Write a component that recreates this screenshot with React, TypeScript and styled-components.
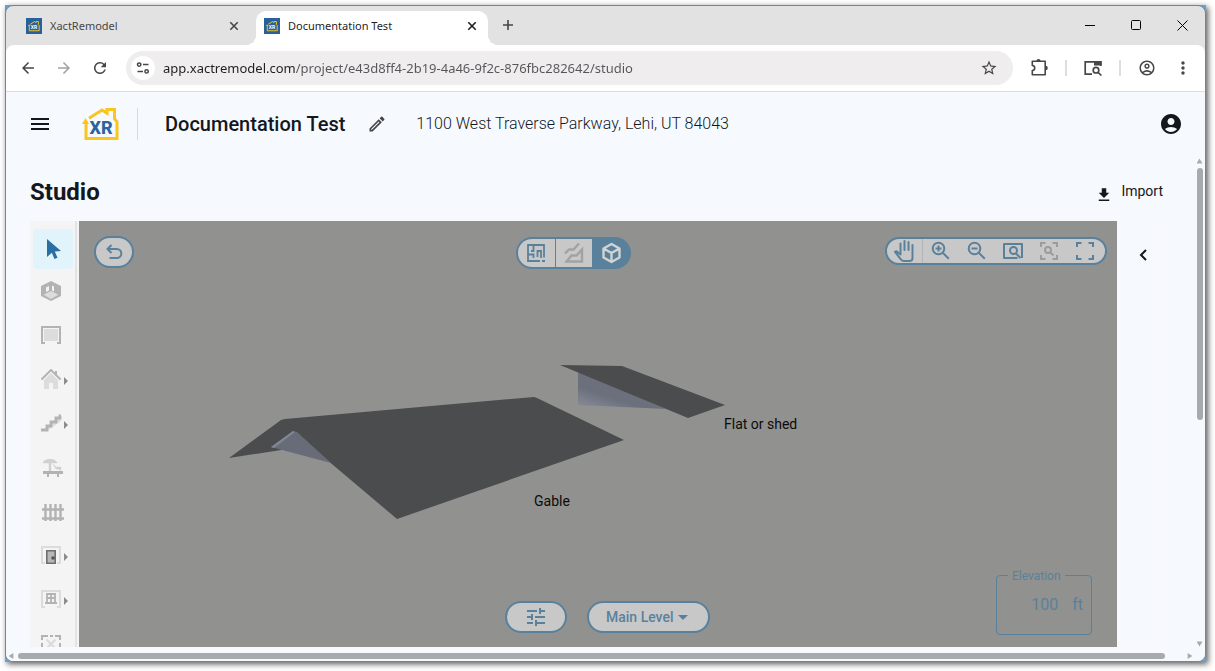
import React from "react";
import styled, { createGlobalStyle, css } from "styled-components";
import {
  MdArrowBack,
  MdArrowForward,
  MdRefresh,
  MdStarOutline,
  MdOutlineAccountCircle,
  MdAccountCircle,
  MdMoreVert,
  MdOutlineModeEdit,
  MdDownload,
  MdTune,
} from "react-icons/md";

const steel = "#5a819c";
const ink = "#14181d";
const chromeInk = "#474747";
const page = "#f6fafe";
const pill = "#c8c8c8";

const GlobalStyle = createGlobalStyle`
  *, *::before, *::after { box-sizing: border-box; }
  body { margin: 0; background: #fff; font-family: Roboto, sans-serif; color: ${ink}; }
  button, input, select { font: inherit; color: inherit; margin: 0; }
  button { border: 0; padding: 0; background: none; cursor: pointer; }
  svg { display: block; flex: none; }
  h1, h2 { margin: 0; }
`;

const Desktop = styled.div`
  height: 100vh;
  padding: 5px 9px 9px 5px;
  overflow: hidden;
`;

const Backdrop = styled.div`
  height: 100%;
  background: #6aa0cc;
  box-shadow: 2px 2px 6px rgba(0, 0, 0, 0.65);
`;

const BrowserWindow = styled.div`
  height: 100%;
  display: flex;
  flex-direction: column;
  overflow: hidden;
  border: 1px solid #6488a8;
  border-radius: 8px;
  background: #e2e2e2;
`;

/* ---------- browser chrome ---------- */

const chromeFont = css`
  font-family: "Segoe UI", "Noto Sans", "Open Sans", sans-serif;
`;

const TabStrip = styled.div`
  ${chromeFont}
  height: 39px;
  flex: none;
  display: flex;
  align-items: flex-end;
  padding-left: 12px;
`;

const TabItem = styled.div<{ $active?: boolean }>`
  position: relative;
  width: 232px;
  height: 34px;
  padding: 0 8px 5px;
  margin-right: 6px;
  display: flex;
  align-items: center;
  gap: 8px;
  font-size: 11px;
  color: ${(p) => (p.$active ? "#1f1f1f" : chromeInk)};
  ${(p) =>
    p.$active &&
    css`
      background: #fff;
      border-radius: 10px 10px 0 0;
      &::before,
      &::after {
        content: "";
        position: absolute;
        bottom: 0;
        width: 10px;
        height: 10px;
      }
      &::before {
        left: -10px;
        background: radial-gradient(circle at 0 0, transparent 10px, #fff 10px);
      }
      &::after {
        right: -10px;
        background: radial-gradient(circle at 100% 0, transparent 10px, #fff 10px);
      }
    `}
`;

const TabTitle = styled.span`
  flex: 1;
  white-space: nowrap;
`;

const SmallButton = styled.button`
  width: 16px;
  height: 16px;
  display: grid;
  place-items: center;
`;

const NewTabButton = styled(SmallButton)`
  width: 28px;
  height: 28px;
  margin-bottom: 6px;
  color: ${chromeInk};
`;

const WindowControls = styled.div`
  margin-left: auto;
  align-self: stretch;
  display: flex;
  color: #000;
`;

const WindowButton = styled.button`
  width: 46px;
  height: 38px;
  display: grid;
  place-items: center;
`;

const Toolbar = styled.div`
  ${chromeFont}
  height: 47px;
  flex: none;
  display: flex;
  align-items: center;
  padding: 0 4px;
  background: #fff;
  border-radius: 8px 8px 0 0;
  border-bottom: 1px solid #dcdfe1;
  color: ${chromeInk};
`;

const ToolbarButton = styled.button<{ $dim?: boolean }>`
  width: 36px;
  height: 34px;
  display: grid;
  place-items: center;
  opacity: ${(p) => (p.$dim ? 0.5 : 1)};
`;

const AddressBar = styled.div`
  flex: 1;
  height: 34px;
  margin: 0 8px;
  padding: 0 6px 0 5px;
  display: flex;
  align-items: center;
  border-radius: 17px;
  background: #efeded;
`;

const SiteInfo = styled.button`
  width: 24px;
  height: 24px;
  border-radius: 50%;
  background: #fff;
  display: grid;
  place-items: center;
`;

const UrlInput = styled.input`
  flex: 1;
  min-width: 0;
  margin-left: 8px;
  padding: 0;
  border: 0;
  outline: 0;
  font-size: 13px;
  color: transparent;
  background: linear-gradient(90deg, #1f1f1f 132px, #55555a 132px);
  background-clip: text;
  -webkit-background-clip: text;
`;

const ToolbarDivider = styled.span`
  width: 2px;
  height: 16px;
  margin: 0 8px;
  background: #dedede;
`;

/* ---------- application ---------- */

const AppShell = styled.div`
  flex: 1;
  min-height: 0;
  display: flex;
  flex-direction: column;
  background: ${page};
`;

const Header = styled.header`
  height: 64px;
  flex: none;
  display: flex;
  align-items: center;
  padding: 0 22px 0 24px;
`;

const IconButton = styled.button`
  display: grid;
  place-items: center;
`;

const LogoLink = styled.a`
  margin-left: 32px;
  padding-right: 17px;
  border-right: 1px solid #d5dae0;
`;

const ProjectName = styled.h1`
  margin: 0 22px 0 27px;
  font-size: 20px;
  line-height: 24px;
  font-weight: 500;
  white-space: nowrap;
`;

const ProjectAddress = styled.span`
  margin-left: 29px;
  flex: 1;
  font-size: 16px;
  line-height: 24px;
  font-weight: 300;
  white-space: nowrap;
`;

const ScrollArea = styled.div`
  flex: 1;
  min-height: 0;
  display: flex;
`;

const Content = styled.main`
  flex: 1;
  min-width: 0;
  display: flex;
  flex-direction: column;
  padding: 0 27px 0 24px;
`;

const TitleRow = styled.div`
  height: 65px;
  flex: none;
  display: flex;
  align-items: center;
  justify-content: space-between;
  padding: 6px 4px 0 0;
`;

const PageTitle = styled.h2`
  font-size: 24px;
  line-height: 32px;
  font-weight: 700;
`;

const ImportButton = styled.button`
  display: flex;
  align-items: center;
  gap: 8px;
  padding-bottom: 2px;
  font-size: 14px;
  line-height: 20px;
  svg {
    margin-top: 8px;
  }
`;

const Studio = styled.section`
  flex: 1;
  min-height: 0;
  display: flex;
`;

const ToolColumn = styled.div`
  width: 49px;
  display: flex;
  flex-direction: column;
  gap: 4px;
  padding: 8px 2px 0 3px;
  overflow: hidden;
  background: linear-gradient(90deg, #f4f4f4 45px, #e2e3e4 45px 47px, #f4f4f4 47px);
`;

const ToolButton = styled.button<{ $active?: boolean }>`
  position: relative;
  width: 40px;
  height: 40px;
  flex: none;
  display: grid;
  place-items: center;
  border-radius: 4px;
  background: ${(p) => (p.$active ? "#e1f3fb" : "transparent")};
`;

const FlyoutMark = styled.span`
  position: absolute;
  right: 5px;
  top: 16px;
  border: 4px solid transparent;
  border-left-color: #8c8c8c;
  border-right: 0;
`;

const Viewport = styled.div`
  position: relative;
  flex: 1;
  min-width: 0;
  display: flex;
  flex-direction: column;
  justify-content: space-between;
  overflow: hidden;
  background: #91918f;
  color: ${steel};
`;

const Scene = styled.svg`
  position: absolute;
  left: 0;
  top: 0;
`;

const SceneLabel = styled.span<{ $x: number; $y: number }>`
  position: absolute;
  left: ${(p) => p.$x}px;
  top: ${(p) => p.$y}px;
  font-size: 14px;
  line-height: 20px;
  color: #0b0b0b;
  white-space: nowrap;
`;

const ViewportBar = styled.div`
  position: relative;
  display: flex;
  align-items: flex-start;
  padding: 15px 10px 0 15px;
`;

const BottomBar = styled(ViewportBar)`
  padding: 0 25px 12px 0;
  align-items: flex-end;
`;

const Space = styled.span<{ $grow: number }>`
  flex: ${(p) => p.$grow};
`;

const pillShape = css`
  border: 2px solid ${steel};
  border-radius: 16px;
  background: ${pill};
`;

const PillButton = styled.button<{ $width: number }>`
  ${pillShape}
  width: ${(p) => p.$width}px;
  height: 32px;
  display: grid;
  place-items: center;
`;

const ViewSwitch = styled.div`
  ${pillShape}
  height: 32px;
  margin-top: 1px;
  display: flex;
  overflow: hidden;
  background: ${steel};
`;

const ViewButton = styled.button<{ $active?: boolean; $muted?: boolean }>`
  width: 37px;
  display: grid;
  place-items: center;
  background: ${(p) => (p.$active ? steel : pill)};
  color: ${(p) => (p.$active ? "#d3d3d3" : p.$muted ? "#a2a2a2" : steel)};
  & + & {
    border-left: 1px solid ${steel};
  }
`;

const ZoomBar = styled.div`
  ${pillShape}
  height: 28px;
  margin-top: 1px;
  padding-right: 2px;
  display: flex;
`;

const ZoomButton = styled.button<{ $muted?: boolean }>`
  width: 36px;
  display: grid;
  place-items: center;
  color: ${(p) => (p.$muted ? "#9c9c9c" : steel)};
  &:first-child {
    border-right: 1px solid #b2b4b6;
  }
`;

const LevelPicker = styled.label`
  ${pillShape}
  height: 32px;
  margin-left: 20px;
  padding-right: 20px;
  display: flex;
  align-items: center;
  gap: 4px;
`;

const LevelSelect = styled.select`
  appearance: none;
  border: 0;
  outline: 0;
  height: 26px;
  padding: 0 0 0 17px;
  background: transparent;
  font-size: 14px;
  font-weight: 500;
`;

const ControlGroup = styled.div`
  display: flex;
  padding: 0 2px 2px 0;
`;

const ElevationBox = styled.fieldset`
  width: 96px;
  height: 67px;
  min-width: 0;
  margin: 0;
  padding: 12px 8px 0;
  border: 1px solid ${steel};
  border-radius: 4px;
  legend {
    margin-left: 3px;
    padding: 1px 4px 0;
    font-size: 12px;
    line-height: 14px;
  }
`;

const ElevationValue = styled.label`
  display: flex;
  gap: 14px;
  font-size: 16px;
  line-height: 20px;
  input {
    flex: 1;
    min-width: 0;
    padding: 0;
    border: 0;
    outline: 0;
    height: 20px;
    background: none;
    text-align: right;
  }
`;

const SidePanel = styled.aside`
  width: 50px;
  padding-top: 24px;
  display: flex;
  justify-content: center;
  align-items: flex-start;
  border: solid #f9f9fb;
  border-width: 1px 1px 1px 0;
  border-radius: 0 8px 8px 0;
`;

const Arrow = styled.span<{ $dir: "up" | "down" | "left" | "right" }>`
  width: 6px;
  height: 6px;
  flex: none;
  background: #a7abae;
  clip-path: ${(p) =>
    ({
      up: "polygon(50% 10%, 100% 90%, 0 90%)",
      down: "polygon(0 10%, 100% 10%, 50% 90%)",
      left: "polygon(90% 0, 90% 100%, 10% 50%)",
      right: "polygon(10% 0, 90% 50%, 10% 100%)",
    })[p.$dir]};
`;

const VerticalBar = styled.div`
  width: 11px;
  display: flex;
  flex-direction: column;
  align-items: center;
  gap: 4px;
  padding-top: 2px;
`;

const HorizontalBar = styled.div`
  height: 14px;
  flex: none;
  display: flex;
  align-items: center;
  padding: 4px 12px 0 2px;
`;

const Thumb = styled.span<{ $grow: number }>`
  flex: ${(p) => p.$grow};
  min-width: 6px;
  min-height: 6px;
  border-radius: 3px;
  background: #a7abae;
`;

const WideThumb = styled(Thumb)`
  margin: 0 22px 0 4px;
`;

/* ---------- drawings ---------- */

const HouseOutline = () => (
  <>
    <path d="M7 10.200 20 2l5 3.200V1.500h7.500V11l2.500 2.500v17H4V13" fill="none" stroke="#fac51c" strokeWidth="3" />
    <path d="M0 16 3.500 10 7 16z" fill="#fac51c" />
  </>
);

const Logo = () => (
  <svg width="38" height="32" viewBox="0 0 38 32" role="img" aria-label="XactRemodel">
    <HouseOutline />
    <text x="19" y="26" textAnchor="middle" fontFamily="Roboto" fontWeight="800" fontSize="18" fill="#2b62a0">
      XR
    </text>
  </svg>
);

const Favicon = () => (
  <svg width="16" height="16" viewBox="0 0 16 16" aria-hidden="true">
    <rect width="16" height="16" fill="#28609c" />
    <g transform="translate(2 3) scale(.32)">
      <HouseOutline />
    </g>
    <text x="8" y="11" textAnchor="middle" fontFamily="Roboto" fontWeight="700" fontSize="5" fill="#fff">
      XR
    </text>
  </svg>
);

const line = { fill: "none", stroke: "currentColor" } as const;

const CloseIcon = () => (
  <svg width="10" height="10" viewBox="0 0 10 10" {...line} strokeWidth="1.600">
    <path d="M1.300 1.300l7.400 7.400M8.700 1.300l-7.400 7.400" />
  </svg>
);

const SiteIcon = () => (
  <svg width="14" height="14" viewBox="0 0 14 14" {...line} strokeWidth="1.500">
    <circle cx="3.200" cy="3.600" r="1.700" />
    <path d="M7 3.600h5.500M1.500 10.400H7" />
    <circle cx="10.600" cy="10.400" r="1.700" />
  </svg>
);

const PuzzleIcon = () => (
  <svg width="20" height="20" viewBox="0 0 20 20" {...line} strokeWidth="1.600">
    <path d="M3.300 3.300h12.900v13.400H3.300v-4.200c3.200 0 3.200-5 0-5z" strokeLinejoin="round" />
    <path d="M7.400 3a2.100 2.100 0 0 1 4.200 0zM16.600 7.800a2.200 2.200 0 0 1 0 4.400z" fill="currentColor" stroke="none" />
  </svg>
);

const LensIcon = () => (
  <svg width="20" height="20" viewBox="0 0 20 20" {...line} strokeWidth="1.700">
    <path d="M9 16.200H2.200V3.800h15.600V8" />
    <path d="M11 3h7.600v4.500H11z" fill="currentColor" stroke="none" />
    <circle cx="13" cy="12.200" r="2.800" />
    <path d="m15 14.300 3.400 3.200" />
  </svg>
);

const UndoIcon = () => (
  <svg width="20" height="20" viewBox="0 0 20 20" {...line} strokeWidth="2">
    <path d="M7.500 3 3.500 7l4 4M3.800 7h9a4.500 4.500 0 0 1 0 9H5.500" />
  </svg>
);

const PlanIcon = () => (
  <svg width="18" height="18" viewBox="0 0 18 18" {...line} strokeWidth="1.800">
    <path d="M13 17H1V1h16v12.500M15 17h3M1 10.500h5.500V14M6.500 1v6H4M10.500 13V7H14v7" />
  </svg>
);

const TerrainIcon = () => (
  <svg width="20" height="20" viewBox="0 0 20 20" {...line} strokeWidth="2.400">
    <path d="M2.500 18.500 7.500 12.500h5l5.500-6v12zM1 10.500l4-4h4.500l5.500-6" />
  </svg>
);

const CubeIcon = () => (
  <svg width="22" height="22" viewBox="0 0 22 22" {...line} strokeWidth="2.400" strokeLinejoin="round">
    <path d="m11.500 2 8 4.500v9l-8 4.500-8-4.500v-9zM4 6.800 11.500 11 19 6.800M11.500 11v8.500" />
  </svg>
);

const HandIcon = () => (
  <svg width="24" height="24" viewBox="0 0 24 24" {...line} strokeWidth="2" strokeLinecap="round" strokeLinejoin="round">
    <path d="M7.500 15.500V4.500M11.500 11V2M15.500 11V3M19.500 6v13a3 3 0 0 1-3 3H11a4 4 0 0 1-3.200-1.600L2 12.800l1.500-.5 4 3.200" />
  </svg>
);

const MagnifierIcon = ({ plus }: { plus?: boolean }) => (
  <svg width="20" height="20" viewBox="0 0 20 20" {...line} strokeWidth="2">
    <circle cx="7.500" cy="7.500" r="5.800" />
    <path d="m11.800 11.800 6 6M4.500 7.500h6" />
    {plus && <path d="M7.500 4.500v6" />}
  </svg>
);

const WindowZoomIcon = () => (
  <svg width="22" height="20" viewBox="0 0 22 20" {...line} strokeWidth="2" strokeLinejoin="round">
    <path d="M15.500 17H2V3h18v14M13.500 12l5 5" />
    <circle cx="11.500" cy="9.500" r="3.500" />
  </svg>
);

const CornersIcon = () => (
  <svg width="20" height="20" viewBox="0 0 20 20" {...line} strokeWidth="2">
    <path d="M2 6V2h4.500M13.500 2H18v4M18 14v4h-4.500M6.500 18H2v-4" />
  </svg>
);

const SelectionZoomIcon = () => (
  <svg width="20" height="20" viewBox="0 0 20 20" {...line} strokeWidth="2">
    <path d="M2 6V2h4.500M13.500 2H18v4M18 14v4h-4.500M6.500 18H2v-4" />
    <circle cx="9" cy="9" r="3" />
    <path d="m11 11 3.500 3.500" />
  </svg>
);

const grey = "#b3b3b3";
const pale = "#dcdcdc";

const toolDrawings: Record<string, React.ReactNode> = {
  Select: <path d="M6 2v18l4.800-4.200 2.700 6.200 3-1.200-2.700-6.300 6.200-.5z" fill="#2a6fa3" />,
  Room: (
    <>
      <path d="m10 0 10 5v10l-10 5-10-5V5z" fill={grey} />
      <path d="m10 10 7.500 3.700L10 18l-7.500-4.300z" fill={pale} />
      <path d="m5 6.500 3-1.500v4.500L5 11zM11 4.500l2 1v5l-2-1z" fill="#f4f4f4" />
    </>
  ),
  Wall: (
    <>
      <path d="M3 4h14v12H3z" fill={pale} />
      <path d="M4 18H1V2h18v16h-3" fill="none" stroke={grey} strokeWidth="2" />
    </>
  ),
  Roof: (
    <>
      <path d="M3 11 10 4l7 7v9h-5v-6H8v6H3z" fill={pale} />
      <path d="M.5 10.500 10 1l9.500 9.500M15 6V2" fill="none" stroke={grey} strokeWidth="2" />
    </>
  ),
  Stairs: (
    <>
      <path d="M0 18h6L20 8V4z" fill={pale} />
      <path d="M0 17h6v-4h4V9h5V5h4V3h1" fill="none" stroke={grey} strokeWidth="2.800" />
    </>
  ),
  Patio: (
    <>
      <path d="M2 6c1-5 13-5 14 0zM8 5h2v9H8zM12 7l3 3h5v3h-2v-1h-3z" fill="#d0d0d0" stroke="#d0d0d0" strokeWidth=".5" />
      <path d="M2 14h20v3H2zM6 17h2v3H6zM16 17h2v3h-2z" fill={grey} />
    </>
  ),
  Fence: (
    <path
      d="M1 8.500h22M1 17.500h22M4.500 3v17M9.500 3v17M14.500 3v17M19.500 3v17"
      fill="none"
      stroke={grey}
      strokeWidth="2.400"
    />
  ),
  Door: (
    <>
      <path d="M4 18H1V2h18v16h-3" fill="none" stroke={pale} strokeWidth="2" />
      <path d="M5.800 5.800h8.400v12.400H5.800z" fill="#b8b8b8" stroke="#6f6f6f" strokeWidth="1.600" />
      <circle cx="12" cy="13" r="1.800" fill="#555" />
    </>
  ),
  Window: (
    <>
      <path d="M4 18H1V2h18v16h-3" fill="none" stroke={pale} strokeWidth="2" />
      <path d="M6 5h8v9H6zM10 5v9M6 9h8M4 14h12" fill="none" stroke={grey} strokeWidth="1.800" />
    </>
  ),
  Opening: (
    <>
      <path d="M1 7V3h6M9 3h3M14 3h5v4M1 10v4M19 10v4M1 17v3h4M19 17v3h-4" fill="none" stroke={grey} strokeWidth="2" />
      <path d="m5.500 6.500 9 9M14.500 6.500l-9 9" fill="none" stroke={pale} strokeWidth="2.200" />
    </>
  ),
};

const withFlyout = ["Roof", "Stairs", "Door", "Window"];

const zoomTools = [
  { name: "Pan", icon: <HandIcon /> },
  { name: "Zoom in", icon: <MagnifierIcon plus /> },
  { name: "Zoom out", icon: <MagnifierIcon /> },
  { name: "Zoom to window", icon: <WindowZoomIcon /> },
  { name: "Zoom to selection", icon: <SelectionZoomIcon />, muted: true },
  { name: "Zoom to fit", icon: <CornersIcon /> },
];

const Roofs = () => (
  <Scene width="660" height="310" viewBox="0 0 660 310" aria-hidden="true">
    <defs>
      <linearGradient id="wall" gradientUnits="userSpaceOnUse" x1="500" y1="186" x2="506" y2="168">
        <stop offset="0" stopColor="#858a96" />
        <stop offset=".4" stopColor="#7d828e" />
        <stop offset="1" stopColor="#6b707c" />
      </linearGradient>
    </defs>
    <path d="M150 237l52-38 4-1 249-22 3 1 87 42-227 79-103-87-13 18z" fill="#4b4c4d" />
    <path d="M192 226l22-16 4 1 34 31z" fill="#676c78" />
    <path d="M192 226l22-16 2 1-21 16z" fill="#7f8793" />
    <path d="M499 150v34l88 4z" fill="url(#wall)" />
    <path d="M481 144l62 1 103 39-37 13z" fill="#4b4c4d" />
  </Scene>
);

export default function App() {
  return (
    <>
      <GlobalStyle />
      <Desktop>
        <Backdrop>
          <BrowserWindow>
            <TabStrip>
              <TabItem>
                <Favicon />
                <TabTitle>XactRemodel</TabTitle>
                <SmallButton aria-label="Close tab">
                  <CloseIcon />
                </SmallButton>
              </TabItem>
              <TabItem $active>
                <Favicon />
                <TabTitle>Documentation Test</TabTitle>
                <SmallButton aria-label="Close tab">
                  <CloseIcon />
                </SmallButton>
              </TabItem>
              <NewTabButton aria-label="New tab">
                <svg width="12" height="12" viewBox="0 0 12 12" {...line} strokeWidth="1.600">
                  <path d="M6 1v10M1 6h10" />
                </svg>
              </NewTabButton>
              <WindowControls>
                <WindowButton aria-label="Minimize">
                  <svg width="11" height="11" {...line}>
                    <path d="M0 5.500h10" />
                  </svg>
                </WindowButton>
                <WindowButton aria-label="Maximize">
                  <svg width="11" height="11" {...line}>
                    <rect x=".5" y=".5" width="9" height="9" rx="1" />
                  </svg>
                </WindowButton>
                <WindowButton aria-label="Close">
                  <svg width="11" height="11" {...line}>
                    <path d="m.5.500 10 10M10.500.500l-10 10" />
                  </svg>
                </WindowButton>
              </WindowControls>
            </TabStrip>

            <Toolbar>
              <ToolbarButton aria-label="Back">
                <MdArrowBack size={18} />
              </ToolbarButton>
              <ToolbarButton aria-label="Forward" $dim>
                <MdArrowForward size={18} />
              </ToolbarButton>
              <ToolbarButton aria-label="Reload">
                <MdRefresh size={18} />
              </ToolbarButton>
              <AddressBar>
                <SiteInfo aria-label="Site information">
                  <SiteIcon />
                </SiteInfo>
                <UrlInput
                  aria-label="Address"
                  defaultValue="app.xactremodel.com/project/e43d8ff4-2b19-4a46-9f2c-876fbc282642/studio"
                />
                <ToolbarButton aria-label="Bookmark">
                  <MdStarOutline size={18} />
                </ToolbarButton>
              </AddressBar>
              <ToolbarButton aria-label="Extensions">
                <PuzzleIcon />
              </ToolbarButton>
              <ToolbarDivider />
              <ToolbarButton aria-label="Search this page">
                <LensIcon />
              </ToolbarButton>
              <ToolbarDivider />
              <ToolbarButton aria-label="Profile">
                <MdOutlineAccountCircle size={18} />
              </ToolbarButton>
              <ToolbarButton aria-label="Menu">
                <MdMoreVert size={20} />
              </ToolbarButton>
            </Toolbar>

            <AppShell>
              <Header>
                <IconButton aria-label="Open navigation">
                  <svg width="20" height="14" viewBox="0 0 20 14" {...line} strokeWidth="2">
                    <path d="M1 2h18M1 7h18M1 12h18" />
                  </svg>
                </IconButton>
                <LogoLink href="#">
                  <Logo />
                </LogoLink>
                <ProjectName>Documentation Test</ProjectName>
                <IconButton aria-label="Edit project name">
                  <MdOutlineModeEdit size={20} color="#45454d" />
                </IconButton>
                <ProjectAddress>1100 West Traverse Parkway, Lehi, UT 84043</ProjectAddress>
                <IconButton aria-label="Account">
                  <MdAccountCircle size={24} />
                </IconButton>
              </Header>

              <ScrollArea>
                <Content>
                  <TitleRow>
                    <PageTitle>Studio</PageTitle>
                    <ImportButton>
                      <MdDownload size={18} />
                      Import
                    </ImportButton>
                  </TitleRow>
                  <Studio>
                    <ToolColumn>
                      {Object.entries(toolDrawings).map(([name, drawing]) => (
                        <ToolButton key={name} aria-label={name} $active={name === "Select"}>
                          <svg width="24" height="24" viewBox="0 0 24 24">
                            {drawing}
                          </svg>
                          {withFlyout.includes(name) && <FlyoutMark />}
                        </ToolButton>
                      ))}
                    </ToolColumn>
                    <Viewport>
                      <Roofs />
                      <SceneLabel $x={645} $y={193}>
                        Flat or shed
                      </SceneLabel>
                      <SceneLabel $x={455} $y={270}>
                        Gable
                      </SceneLabel>
                      <ViewportBar>
                        <PillButton $width={40} aria-label="Undo">
                          <UndoIcon />
                        </PillButton>
                        <Space $grow={3} />
                        <ViewSwitch>
                          <ViewButton aria-label="Plan view">
                            <PlanIcon />
                          </ViewButton>
                          <ViewButton aria-label="Elevation view" $muted>
                            <TerrainIcon />
                          </ViewButton>
                          <ViewButton aria-label="3D view" $active>
                            <CubeIcon />
                          </ViewButton>
                        </ViewSwitch>
                        <Space $grow={2} />
                        <ZoomBar>
                          {zoomTools.map((tool) => (
                            <ZoomButton key={tool.name} aria-label={tool.name} $muted={tool.muted}>
                              {tool.icon}
                            </ZoomButton>
                          ))}
                        </ZoomBar>
                      </ViewportBar>
                      <BottomBar>
                        <Space $grow={3} />
                        <ControlGroup>
                          <PillButton $width={62} aria-label="Display settings">
                            <MdTune size={24} />
                          </PillButton>
                          <LevelPicker>
                            <LevelSelect aria-label="Level">
                              <option>Main Level</option>
                            </LevelSelect>
                            <svg width="10" height="5" viewBox="0 0 10 5" fill="currentColor">
                              <path d="M0 0h10L5 5z" />
                            </svg>
                          </LevelPicker>
                        </ControlGroup>
                        <Space $grow={2} />
                        <ElevationBox>
                          <legend>Elevation</legend>
                          <ElevationValue>
                            <input defaultValue="100" aria-label="Elevation in feet" />
                            ft
                          </ElevationValue>
                        </ElevationBox>
                      </BottomBar>
                    </Viewport>
                    <SidePanel>
                      <IconButton aria-label="Expand panel">
                        <svg width="20" height="20" viewBox="0 0 20 20" {...line} strokeWidth="2">
                          <path d="m14 4-5 5 5 5" />
                        </svg>
                      </IconButton>
                    </SidePanel>
                  </Studio>
                </Content>
                <VerticalBar>
                  <Arrow $dir="up" />
                  <Thumb $grow={254} />
                  <Space $grow={215} />
                  <Arrow $dir="down" />
                </VerticalBar>
              </ScrollArea>
              <HorizontalBar>
                <Arrow $dir="left" />
                <WideThumb $grow={1} />
                <Arrow $dir="right" />
              </HorizontalBar>
            </AppShell>
          </BrowserWindow>
        </Backdrop>
      </Desktop>
    </>
  );
}
